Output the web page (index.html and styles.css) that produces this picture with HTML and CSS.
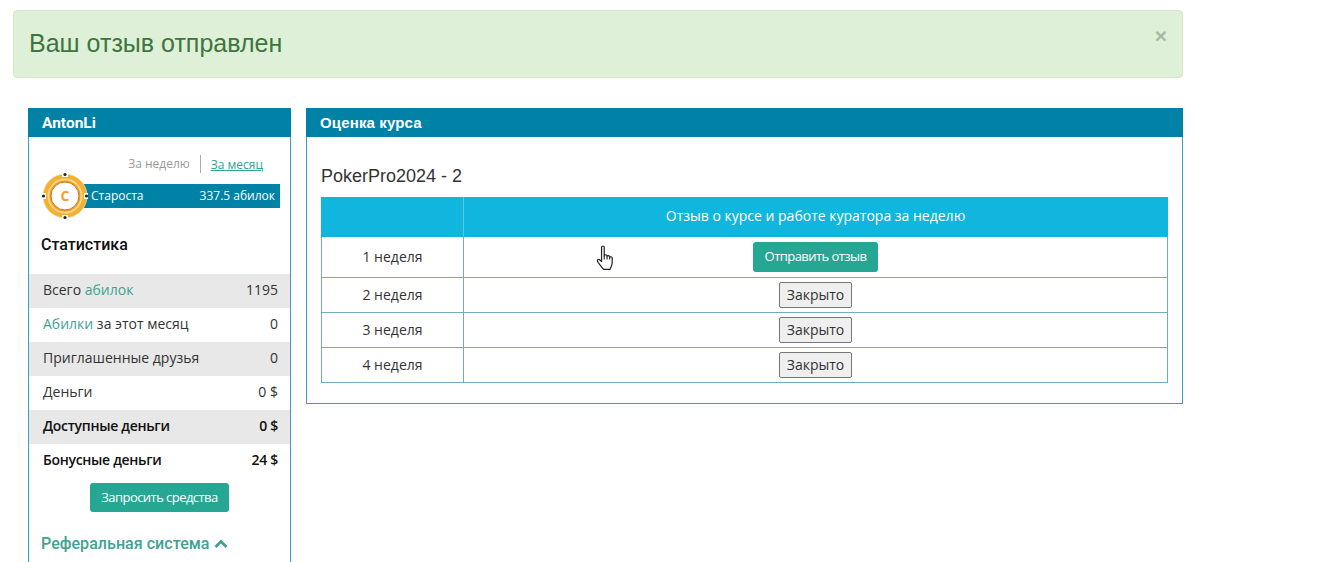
FILE: index.html
```html
<!DOCTYPE html>
<html lang="ru">
<head>
<meta charset="utf-8">
<title>Оценка курса</title>
<link rel="stylesheet" href="styles.css">
</head>
<body>
<div class="page">
  <div class="alert">
    <span class="alert-text">Ваш отзыв отправлен</span>
    <span class="alert-close">×</span>
  </div>
  <div class="columns">
    <aside class="panel side">
      <div class="panel-head head-roboto">AntonLi</div>
      <div class="tabs">
        <span class="tab-week">За неделю</span>
        <a class="tab-month">За месяц</a>
      </div>
      <div class="rank">
        <svg class="chip" width="50" height="50" viewBox="0 0 50 50">
          <circle cx="25" cy="25" r="22" fill="#f6b02c" stroke="#eadcc0" stroke-width="0.8"/>
          <circle cx="25" cy="25" r="17.5" fill="#f9d48e"/>
          <circle cx="25" cy="25" r="15.500" fill="#f39c1f"/>
          <circle cx="25" cy="25" r="14" fill="#fff" stroke="#c9761a" stroke-width="1"/>
          <rect x="22" y="2" width="6" height="4" fill="#fff"/>
          <rect x="22" y="44" width="6" height="4" fill="#fff"/>
          <rect x="2" y="22" width="4" height="6" fill="#fff"/>
          <rect x="44" y="22" width="4" height="6" fill="#fff"/>
          <circle cx="25" cy="3.500" r="1.600" fill="#222"/>
          <circle cx="25" cy="46.500" r="1.600" fill="#222"/>
          <circle cx="3.500" cy="25" r="1.600" fill="#222"/>
          <circle cx="46.500" cy="25" r="1.600" fill="#222"/>
          <text x="25" y="30" text-anchor="middle" class="chip-letter">C</text>
        </svg>
        <div class="rank-bar">
          <span>Староста</span>
          <span>337.5 абилок</span>
        </div>
      </div>
      <h3 class="stats-title">Статистика</h3>
      <ul class="stats">
        <li class="stat shade"><span>Всего <a class="teal">абилок</a></span><span>1195</span></li>
        <li class="stat"><span><a class="teal">Абилки</a> за этот месяц</span><span>0</span></li>
        <li class="stat shade"><span>Приглашенные друзья</span><span>0</span></li>
        <li class="stat"><span>Деньги</span><span>0 $</span></li>
        <li class="stat shade strong"><span>Доступные деньги</span><span>0 $</span></li>
        <li class="stat strong"><span>Бонусные деньги</span><span>24 $</span></li>
      </ul>
      <div class="request"><a class="btn btn-request">Запросить средства</a></div>
      <div class="ref">
        Реферальная система
        <svg class="ref-chevron" width="14" height="10" viewBox="0 0 14 10"><path d="M1.500 8 7 2.500 12.500 8" fill="none" stroke="#3ea392" stroke-width="2.800"/></svg>
      </div>
    </aside>
    <main class="panel course">
      <div class="panel-head head-arial">Оценка курса</div>
      <div class="course-body">
        <h4 class="course-title">PokerPro2024 - 2</h4>
        <table class="weeks">
          <thead>
            <tr class="row-head"><th class="col-week"></th><th>Отзыв о курсе и работе куратора за неделю</th></tr>
          </thead>
          <tbody>
            <tr class="row-first"><td class="week-name">1 неделя</td><td><a class="btn btn-send">Отправить отзыв</a></td></tr>
            <tr class="row"><td class="week-name">2 неделя</td><td><button class="closed">Закрыто</button></td></tr>
            <tr class="row"><td class="week-name">3 неделя</td><td><button class="closed">Закрыто</button></td></tr>
            <tr class="row"><td class="week-name">4 неделя</td><td><button class="closed">Закрыто</button></td></tr>
          </tbody>
        </table>
      </div>
    </main>
  </div>
</div>
<svg class="cursor" width="20" height="27" viewBox="0 0 18 26" preserveAspectRatio="none">
  <path d="M5 2.200c0-1.600 2.400-1.600 2.400 0v8.400c.2-1.600 2.400-1.600 2.500 0v.6c.2-1.400 2.300-1.400 2.400.2v.7c.3-1.200 2.200-1 2.300.5 0 2.300.2 4.600-.4 6.600-.5 1.700-1 3-1.600 4.300H6.800C5.500 21.800 4 19.900 2.700 18 2 17 1 15.800 1.200 14.800c.3-1.400 1.800-1.200 2.500-.3l1.300 1.600z" fill="#fff" stroke="#222" stroke-width="1.100" stroke-linejoin="round"/>
  <path d="M7.400 10.600v3.400M9.900 11.200v2.800M12.300 12v2" stroke="#222" stroke-width="1" fill="none"/>
</svg>
</body>
</html>
```
FILE: styles.css
```css
* { box-sizing: border-box; }
html, body { margin: 0; padding: 0; height: 562px; overflow: hidden; background: #fff; }
body { font-family: "Open Sans", sans-serif; font-size: 14px; color: #333; }
.page { width: 1183px; padding: 10px 0 0 13px; }
.alert {
  height: 68px;
  background: #dff0d8;
  border: 1px solid #d6e9c6;
  border-radius: 4px;
  display: flex;
  justify-content: space-between;
  padding: 0 15px;
  color: #3c763d;
}
.alert-text { font-family: "Liberation Sans", sans-serif; font-size: 25px; line-height: 65px; }
.alert-close { font-family: "Liberation Sans", sans-serif; font-size: 21px; font-weight: bold; color: #a9b8a5; line-height: 50px; }
.columns { display: flex; align-items: flex-start; gap: 15px; margin: 30px 0 0 15px; }
.panel { border: 1px solid #3b9fbc; border-top: 0; }
.side { width: 263px; height: 470px; flex: none; }
.course { width: 877px; height: 296px; flex: none; }
.panel-head {
  height: 29px;
  margin: 0 -1px;
  padding: 0 14px;
  background: #0081a6;
  color: #fff;
  font-size: 15px;
  line-height: 30px;
}
.head-roboto { font-family: Roboto, sans-serif; font-weight: 700; font-size: 15.5px; }
.head-arial { font-family: "Liberation Sans", sans-serif; font-weight: 700; letter-spacing: 0.15px; }
.tabs { display: flex; justify-content: flex-end; align-items: center; height: 18px; margin: 18px 27px 0 0; font-size: 12px; }
.tab-week { color: #999; padding-right: 10px; border-right: 1px solid #aaa; line-height: 18px; }
.tab-month { color: #2aa590; padding-left: 10px; text-decoration: underline; }
.rank { position: relative; height: 24px; margin: 11px 10px 0 12px; }
.chip { position: absolute; left: -1px; top: -13.500px; z-index: 1; }
.chip-letter { font-family: "Open Sans", sans-serif; font-size: 14px; font-weight: 700; fill: #f0a030; }
.rank-bar {
  margin-left: 30px;
  height: 24px;
  padding: 0 5px 0 20px;
  background: #0081a6;
  color: #fff;
  font-size: 12px;
  line-height: 24px;
  display: flex;
  justify-content: space-between;
}
.stats-title { margin: 27px 0 0 12px; height: 39px; font-family: Roboto, sans-serif; font-size: 16px; font-weight: 500; color: #111; line-height: 20px; }
.stats { list-style: none; margin: 0; padding: 0; }
.stat { display: flex; justify-content: space-between; height: 34px; padding: 0 12px 0 14px; line-height: 31px; font-size: 14px; }
.shade { background: #e8e8e8; }
.strong { font-weight: 600; color: #111; letter-spacing: -0.3px; }
.teal { color: #3ea392; }
.btn { display: inline-block; background: #26a794; color: #fff; border-radius: 3px; font-size: 13px; letter-spacing: -0.55px; text-align: center; }
.request { display: flex; justify-content: center; margin-top: 5px; }
.btn-request { width: 139px; height: 29px; line-height: 29px; }
.ref { margin: 22px 0 0 12px; font-family: Roboto, sans-serif; font-weight: 500; font-size: 16px; letter-spacing: 0.05px; line-height: 20px; color: #3ea392; }
.course-body { padding: 29px 14px 0; }
.course-title { margin: 0 0 11px; font-family: "Liberation Sans", sans-serif; font-size: 18px; font-weight: 400; line-height: 20px; color: #333; }
.weeks { width: 847px; border-collapse: collapse; table-layout: fixed; font-size: 14px; }
.weeks td, .weeks th { border: 1px solid #75aabf; padding: 0; text-align: center; vertical-align: middle; }
.col-week { width: 142px; }
.row-head { height: 39px; }
.row-head th { background: #10b6dd; color: #fff; font-weight: 400; border-color: #10b6dd; padding-bottom: 4px; }
.row-head .col-week { border-right-color: #5ec6e2; }
.row-first { height: 41px; }
.row { height: 35px; }
.weeks .week-name { padding-bottom: 2px; }
.row td { padding-bottom: 1px; }
.btn-send { width: 125px; height: 30px; line-height: 29px; vertical-align: middle; }
.closed {
  display: inline-block;
  width: 73px;
  height: 26px;
  padding: 0;
  background: #efefef;
  border: 1px solid #767676;
  border-radius: 2px;
  font-family: "Open Sans", sans-serif;
  font-size: 14px;
  color: #333;
  vertical-align: middle;
}
.cursor { position: absolute; left: 596px; top: 245px; }
```
